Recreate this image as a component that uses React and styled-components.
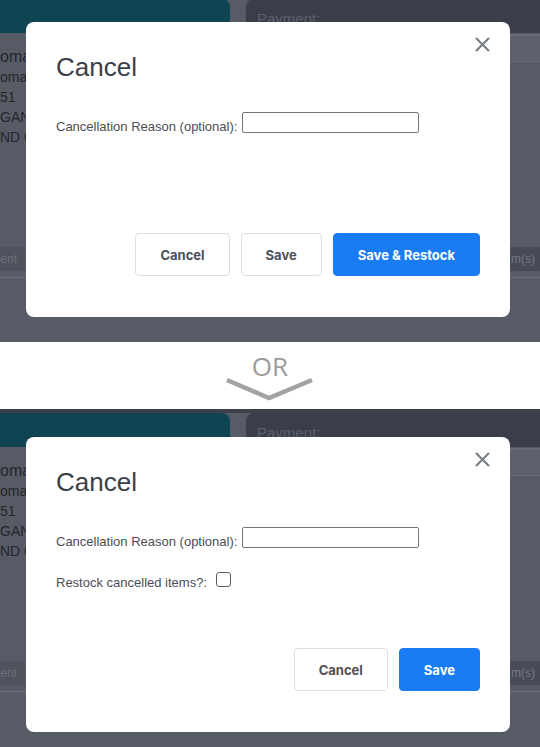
import React from "react";
import styled, { createGlobalStyle } from "styled-components";

const GlobalStyle = createGlobalStyle`
  html, body { margin: 0; padding: 0; background: #ffffff; }
  body { font-family: "Liberation Sans", Arial, sans-serif; width: 540px; }
  * { box-sizing: border-box; }
`;

const Page = styled.main`
  width: 540px;
  display: flex;
  flex-direction: column;
`;

const Panel = styled.section`
  position: relative;
  height: ${(p) => p.$h}px;
  overflow: hidden;
  background: #575b66;
`;

const BgPage = styled.div`
  margin-top: ${(p) => p.$shift}px;
  display: flex;
  flex-direction: column;
`;

const TopStrip = styled.div`
  height: 4px;
  background: #3d404b;
`;

const CardsRow = styled.div`
  display: flex;
  gap: 16px;
  height: 34px;
`;

const TealCard = styled.div`
  width: 230px;
  background: #0f4453;
  border-top-right-radius: 8px;
`;

const DarkCard = styled.div`
  flex: 1;
  background: #3b3e4a;
  border-top-left-radius: 8px;
  padding: 4px 11px 0;
  display: flex;
  align-items: center;
  color: #5c606c;
  font-size: 15px;
`;

const BodyRow = styled.div`
  display: flex;
  gap: 16px;
  height: 214px;
`;

const LeftCol = styled.div`
  width: 230px;
  padding-top: 14px;
`;

const BgLine = styled.div`
  font-size: ${(p) => (p.$big ? "16px" : "14px")};
  line-height: 20px;
  color: #23262c;
  white-space: nowrap;
`;

const RightCol = styled.div`
  flex: 1;
`;

const TableHead = styled.div`
  margin-top: 1px;
  height: 28px;
  background: #5d616c;
  border-top: 2px solid #686c77;
  border-bottom: 1px solid #676b76;
`;

const FooterRow = styled.div`
  display: flex;
  justify-content: space-between;
  height: 24px;
`;

const Tab = styled.div`
  width: ${(p) => p.$w}px;
  background: ${(p) => p.$bg};
  color: ${(p) => p.$fg};
  font-size: 12px;
  display: flex;
  align-items: center;
  justify-content: flex-end;
  padding-right: ${(p) => p.$pr}px;
  overflow: hidden;
  white-space: nowrap;
`;

const Rule = styled.div`
  margin-top: 6px;
  height: 1px;
  background: #6a6e79;
`;

const Overlay = styled.div`
  position: absolute;
  inset: 0;
  padding-top: ${(p) => p.$top}px;
  padding-left: 26px;
`;

const Modal = styled.div`
  position: relative;
  width: 484px;
  height: 295px;
  background: #ffffff;
  border-radius: 8px;
  padding: 30px 30px 41px;
  display: flex;
  flex-direction: column;
`;

const CloseButton = styled.button`
  position: absolute;
  top: 15px;
  right: 20px;
  width: 15px;
  height: 15px;
  padding: 0;
  border: 0;
  background: transparent;
  display: flex;
  cursor: pointer;
`;

const Title = styled.h2`
  margin: 0;
  font-family: "Liberation Sans", Arial, sans-serif;
  font-size: 26px;
  line-height: 30px;
  font-weight: 400;
  color: #3b3e46;
`;

const Form = styled.div`
  margin-top: 30px;
  display: flex;
  flex-direction: column;
  gap: 23px;
`;

const Field = styled.div`
  display: flex;
  align-items: flex-start;
  gap: 5px;
`;

const FieldLabel = styled.label`
  font-size: 13px;
  line-height: 15px;
  color: #4a4d55;
  margin-top: ${(p) => p.$offset}px;
  white-space: nowrap;
`;

const TextInput = styled.input`
  width: 177px;
  height: 21px;
  border: 1px solid #767676;
  border-radius: 2px;
  padding: 1px 3px;
  font-size: 13px;
  outline: none;
`;

const Checkbox = styled.input`
  appearance: none;
  margin: 0 0 0 4px;
  width: 15px;
  height: 15px;
  border: 1px solid #5e5e5e;
  border-radius: 3px;
  background: #fff;
`;

const Footer = styled.div`
  margin-top: auto;
  display: flex;
  justify-content: flex-end;
  gap: 11px;
`;

const Button = styled.button`
  height: 43px;
  padding: 0 24px;
  border-radius: 4px;
  font-family: Inter, "Liberation Sans", Arial, sans-serif;
  font-weight: 700;
  font-size: 13px;
  cursor: pointer;
  background: ${(p) => (p.$primary ? "#1a7cf5" : "#ffffff")};
  color: ${(p) => (p.$primary ? "#ffffff" : "#4d5059")};
  border: 1px solid ${(p) => (p.$primary ? "#1a7cf5" : "#dedede")};
`;

const Separator = styled.div`
  height: 67px;
  background: #ffffff;
  display: flex;
  flex-direction: column;
  align-items: center;
  padding-top: 11px;
`;

const OrText = styled.div`
  font-family: "Open Sans", sans-serif;
  font-size: 26px;
  line-height: 26px;
  color: #9b9b9b;
`;

const Chevron = styled.svg`
  margin-top: -4px;
  display: block;
`;

function CloseIcon() {
  return (
    <svg width="15" height="15" viewBox="0 0 15 15">
      <path d="M1 1 L14 14 M14 1 L1 14" stroke="#7b7f88" strokeWidth="2.2" strokeLinecap="butt" />
    </svg>
  );
}

function Backdrop({ shift }) {
  return (
    <BgPage $shift={shift}>
      <TopStrip />
      <CardsRow>
        <TealCard />
        <DarkCard>Payment:</DarkCard>
      </CardsRow>
      <BodyRow>
        <LeftCol>
          <BgLine $big>oma</BgLine>
          <BgLine>omas</BgLine>
          <BgLine>51</BgLine>
          <BgLine>GAN I</BgLine>
          <BgLine>ND O</BgLine>
        </LeftCol>
        <RightCol>
          <TableHead />
        </RightCol>
      </BodyRow>
      <FooterRow>
        <Tab $w={25} $bg="#4f535e" $fg="#6c707a" $pr={8}>ent</Tab>
        <Tab $w={40} $bg="#474b57" $fg="#767a85" $pr={5}>m(s)</Tab>
      </FooterRow>
      <Rule />
    </BgPage>
  );
}

function CancelDialog({ withCheckbox }) {
  return (
    <Modal>
      <CloseButton aria-label="Close">
        <CloseIcon />
      </CloseButton>
      <Title>Cancel</Title>
      <Form>
        <Field>
          <FieldLabel $offset={7}>Cancellation Reason (optional):</FieldLabel>
          <TextInput type="text" />
        </Field>
        {withCheckbox && (
          <Field>
            <FieldLabel $offset={3}>Restock cancelled items?:</FieldLabel>
            <Checkbox type="checkbox" />
          </Field>
        )}
      </Form>
      <Footer>
        <Button>Cancel</Button>
        {withCheckbox ? (
          <Button $primary>Save</Button>
        ) : (
          <>
            <Button>Save</Button>
            <Button $primary>Save &amp; Restock</Button>
          </>
        )}
      </Footer>
    </Modal>
  );
}

export default function App() {
  return (
    <>
      <GlobalStyle />
      <Page>
        <Panel $h={342}>
          <Backdrop shift={-5} />
          <Overlay $top={22}>
            <CancelDialog />
          </Overlay>
        </Panel>
        <Separator>
          <OrText>OR</OrText>
          <Chevron width="90" height="26" viewBox="0 0 90 26">
            <polyline points="2,5 44,23 87,5" fill="none" stroke="#a3a3a3" strokeWidth="4.5" />
          </Chevron>
        </Separator>
        <Panel $h={338}>
          <Backdrop shift={0} />
          <Overlay $top={28}>
            <CancelDialog withCheckbox />
          </Overlay>
        </Panel>
      </Page>
    </>
  );
}
